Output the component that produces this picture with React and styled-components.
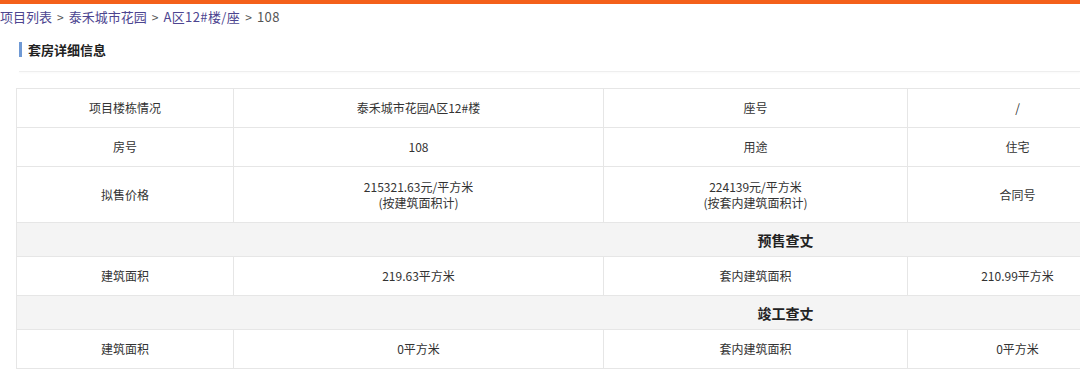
import React from 'react';
import styled, { createGlobalStyle } from 'styled-components';

const GlobalStyle = createGlobalStyle`
  html, body {
    margin: 0;
    padding: 0;
    overflow: hidden;
    background: #ffffff;
    font-family: "Microsoft YaHei", "Noto Sans CJK SC", "Liberation Sans", sans-serif;
    color: #333333;
  }
`;

const TopBar = styled.div`
  height: 4px;
  background-color: #f4601a;
`;

const Crumbs = styled.div`
  display: flex;
  align-items: center;
  height: 24px;
  font-size: 13px;
  color: #555555;
  white-space: nowrap;
`;

const CrumbLink = styled.a`
  color: #4d4590;
  text-decoration: none;
  letter-spacing: ${props => props.latin ? '0.4px' : '0'};
`;

const CrumbSep = styled.span`
  margin: 0 5px;
  color: #555555;
  font-size: 12px;
`;

const CrumbCurrent = styled.span`
  letter-spacing: 0.4px;
`;

const Section = styled.div`
  padding: 13px 0 0 19px;
`;

const Title = styled.div`
  display: flex;
  align-items: center;
  height: 16px;
  font-size: 13px;
  font-weight: bold;
  color: #222222;
  &::before {
    content: '';
    width: 3px;
    height: 15px;
    margin-right: 6px;
    background-color: #6f99d4;
  }
`;

const Divider = styled.div`
  height: 1px;
  margin-top: 14px;
  background-color: #eeeeee;
  box-shadow: 0 1px 2px rgba(0, 0, 0, 0.04);
`;

const Table = styled.table`
  margin: 16px 0 0 16px;
  border-collapse: collapse;
  table-layout: fixed;
  width: 1538px;
  font-size: 12px;
  color: #333333;
`;

const Cell = styled.td`
  border: 1px solid #e6e6e6;
  height: ${props => props.tall ? 55 : 38}px;
  padding: 0 4px;
  text-align: center;
  line-height: 16px;
  vertical-align: middle;
`;

const GroupCell = styled.td`
  border: 1px solid #e6e6e6;
  height: 33px;
  padding: 0;
  line-height: 20px;
  background-color: #f4f4f4;
  text-align: center;
  font-size: 14px;
  font-weight: bold;
  color: #222222;
`;

const widths = [217, 370, 304, 220, 217, 210];

const rows = [
  ['项目楼栋情况', '泰禾城市花园A区12#楼', '座号', '/', '', ''],
  ['房号', '108', '用途', '住宅', '', ''],
];

function App() {
  return (
    <>
      <GlobalStyle />
      <TopBar />
      <Crumbs>
        <CrumbLink href="#">项目列表</CrumbLink>
        <CrumbSep>&gt;</CrumbSep>
        <CrumbLink href="#">泰禾城市花园</CrumbLink>
        <CrumbSep>&gt;</CrumbSep>
        <CrumbLink href="#" latin>A区12#楼/座</CrumbLink>
        <CrumbSep>&gt;</CrumbSep>
        <CrumbCurrent>108</CrumbCurrent>
      </Crumbs>
      <Section>
        <Title>套房详细信息</Title>
        <Divider />
      </Section>
      <Table>
        <colgroup>
          {widths.map((w, i) => <col key={i} style={{ width: w }} />)}
        </colgroup>
        <tbody>
          {rows.map((r, i) => (
            <tr key={i}>
              {r.map((c, j) => <Cell key={j}>{c}</Cell>)}
            </tr>
          ))}
          <tr>
            <Cell tall>拟售价格</Cell>
            <Cell tall>215321.63元/平方米<br />(按建筑面积计)</Cell>
            <Cell tall>224139元/平方米<br />(按套内建筑面积计)</Cell>
            <Cell tall>合同号</Cell>
            <Cell tall colSpan={2}></Cell>
          </tr>
          <tr>
            <GroupCell colSpan={6}>预售查丈</GroupCell>
          </tr>
          <tr>
            <Cell>建筑面积</Cell>
            <Cell>219.63平方米</Cell>
            <Cell>套内建筑面积</Cell>
            <Cell>210.99平方米</Cell>
            <Cell></Cell>
            <Cell></Cell>
          </tr>
          <tr>
            <GroupCell colSpan={6}>竣工查丈</GroupCell>
          </tr>
          <tr>
            <Cell>建筑面积</Cell>
            <Cell>0平方米</Cell>
            <Cell>套内建筑面积</Cell>
            <Cell>0平方米</Cell>
            <Cell></Cell>
            <Cell></Cell>
          </tr>
        </tbody>
      </Table>
    </>
  );
}

export default App;
